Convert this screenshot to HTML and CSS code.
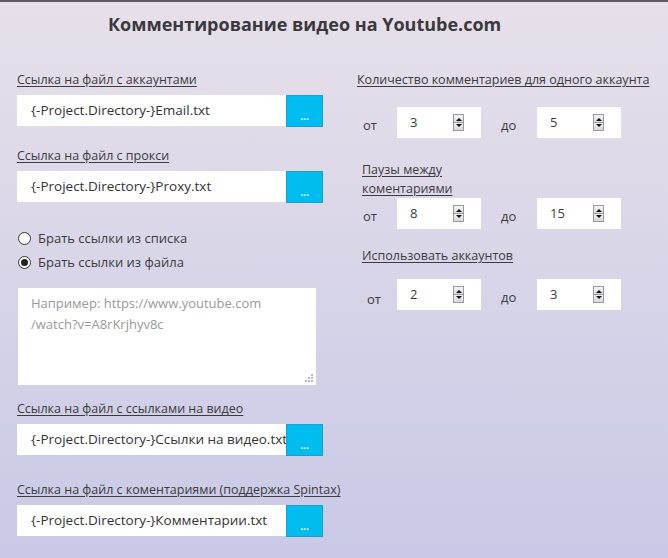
FILE: index.html
```html
<!DOCTYPE html>
<html>
<head>
<title>Комментирование видео на Youtube.com</title>
<meta charset="UTF-8">
<link rel="stylesheet" href="styles.css">
</head>
<body>
	<div id="page">
		<h1 class="title">Комментирование видео на Youtube.com</h1>
		<div class="columns">
			<div class="col-left">
				<div class="field">
					<div class="label">Ссылка на файл с аккаунтами</div>
					<div class="file-row">
						<div class="file-input">{-Project.Directory-}Email.txt</div>
						<button class="browse">...</button>
					</div>
				</div>
				<div class="field field-second">
					<div class="label">Ссылка на файл с прокси</div>
					<div class="file-row">
						<div class="file-input">{-Project.Directory-}Proxy.txt</div>
						<button class="browse">...</button>
					</div>
				</div>
				<div class="radios">
					<label class="radio"><span class="dot"></span>Брать ссылки из списка</label>
					<label class="radio"><span class="dot checked"></span>Брать ссылки из файла</label>
				</div>
				<div class="textarea">
					<div class="placeholder">Например: https://www.youtube.com<br>/watch?v=A8rKrjhyv8c</div>
					<svg class="grip" width="8" height="8" viewBox="0 0 8 8"><g fill="#b8b8c0"><rect x="6" y="0" width="2" height="2"/><rect x="3" y="3" width="2" height="2"/><rect x="6" y="3" width="2" height="2"/><rect x="0" y="6" width="2" height="2"/><rect x="3" y="6" width="2" height="2"/><rect x="6" y="6" width="2" height="2"/></g></svg>
				</div>
				<div class="field field-third">
					<div class="label">Ссылка на файл с ссылками на видео</div>
					<div class="file-row">
						<div class="file-input">{-Project.Directory-}Ссылки на видео.txt</div>
						<button class="browse">...</button>
					</div>
				</div>
				<div class="field field-fourth">
					<div class="label">Ссылка на файл с коментариями (поддержка Spintax)</div>
					<div class="file-row">
						<div class="file-input">{-Project.Directory-}Комментарии.txt</div>
						<button class="browse">...</button>
					</div>
				</div>
			</div>

			<div class="col-right">
				<div class="label">Количество комментариев для одного аккаунта</div>
				<div class="range range-first">
					<span class="word">от</span>
					<div class="num">3<span class="spin"></span></div>
					<span class="word word-to">до</span>
					<div class="num">5<span class="spin"></span></div>
				</div>

				<div class="label label-narrow">Паузы между коментариями</div>
				<div class="range range-second">
					<span class="word">от</span>
					<div class="num">8<span class="spin"></span></div>
					<span class="word word-to">до</span>
					<div class="num">15<span class="spin"></span></div>
				</div>

				<div class="label label-third">Использовать аккаунтов</div>
				<div class="range range-third">
					<span class="word word-shift">от</span>
					<div class="num">2<span class="spin"></span></div>
					<span class="word word-to">до</span>
					<div class="num">3<span class="spin"></span></div>
				</div>
			</div>
		</div>
	</div>
</body>
</html>
```

FILE: styles.css
```css
* {
	box-sizing: border-box;
}

body {
	margin: 0;
	font-family: "Open Sans", "Liberation Sans", sans-serif;
	font-size: 12.5px;
	color: #3c3b40;
}

#page {
	min-height: 558px;
	border-top: 2px solid #5e5a63;
	background: linear-gradient(to bottom, #e7e0ea 0%, #d9d6e8 45%, #c9c9e7 100%);
	padding: 0 0 0 17px;
}

.title {
	margin: 0;
	padding: 10px 0 0 91px;
	height: 68px;
	font-size: 18px;
	font-weight: bold;
	color: #3a393e;
}

.columns {
	display: flex;
	gap: 34px;
}

.col-left {
	width: 306px;
}

.col-right {
	width: 310px;
}

.label {
	line-height: 20px;
	text-decoration: underline;
	text-underline-offset: 2px;
	color: #3c3b40;
	white-space: nowrap;
}

.field .label {
	margin-bottom: 5px;
}

.field-second {
	margin-top: 19px;
}

.field-third {
	margin-top: 14px;
}

.field-fourth {
	margin-top: 24px;
}

.file-row {
	display: flex;
	height: 32px;
}

.file-input {
	width: 269px;
	height: 31px;
	background: #fff;
	padding: 0 0 0 14px;
	line-height: 31px;
	font-size: 13.5px;
	color: #333;
	white-space: nowrap;
	overflow: hidden;
}

.browse {
	width: 37px;
	height: 32px;
	margin: 0;
	border: 1px solid #1d9fcc;
	background: #00bdf0;
	color: #fff;
	font: bold 10px "Open Sans", sans-serif;
	padding: 9px 0 0;
	cursor: pointer;
}

.radios {
	margin-top: 23px;
}

.radio {
	display: flex;
	align-items: center;
	height: 24px;
	padding-left: 1px;
	font-size: 13px;
	color: #3c3b40;
}

.dot {
	width: 13px;
	height: 13px;
	border: 1px solid #333;
	border-radius: 50%;
	background: #fff;
	margin-right: 7px;
	position: relative;
}

.dot.checked::after {
	content: "";
	position: absolute;
	left: 2px;
	top: 2px;
	width: 7px;
	height: 7px;
	border-radius: 50%;
	background: #222;
}

.textarea {
	position: relative;
	margin: 14px 0 0 1px;
	width: 298px;
	height: 97px;
	background: #fff;
	padding: 5px 0 0 13px;
}

.placeholder {
	font-size: 13px;
	line-height: 21px;
	color: #9a9a9a;
}

.grip {
	position: absolute;
	right: 3px;
	bottom: 3px;
}

.label-narrow {
	width: 110px;
	white-space: normal;
	line-height: 19px;
	margin: 22px 0 0 5px;
}

.label-third {
	margin: 17px 0 0 5px;
}

.range {
	display: flex;
	align-items: center;
	height: 31px;
}

.range-first {
	margin-top: 17px;
}

.range-third {
	margin-top: 13px;
}

.word {
	width: 40px;
	padding: 5px 0 0 6px;
	font-size: 13px;
	color: #3c3b40;
}

.word-shift {
	padding: 8px 0 0 10px;
}

.word-to {
	width: 56px;
	padding-left: 20px;
}

.num {
	position: relative;
	width: 84px;
	height: 31px;
	background: #fff;
	padding-left: 13px;
	line-height: 31px;
	font-size: 13px;
	color: #3c3b40;
}

.spin {
	position: absolute;
	left: 56px;
	top: 7px;
	width: 11px;
	height: 17px;
	border: 1px solid #9a9aa0;
	background: linear-gradient(to bottom, #f4f4f4, #dcdcdc 48%, #9a9aa0 48%, #9a9aa0 56%, #f0f0f0 56%, #d8d8d8);
}

.spin::before,
.spin::after {
	content: "";
	position: absolute;
	left: 2px;
	border-left: 3px solid transparent;
	border-right: 3px solid transparent;
}

.spin::before {
	top: 3px;
	border-bottom: 3px solid #111;
}

.spin::after {
	bottom: 3px;
	border-top: 3px solid #111;
}
```
